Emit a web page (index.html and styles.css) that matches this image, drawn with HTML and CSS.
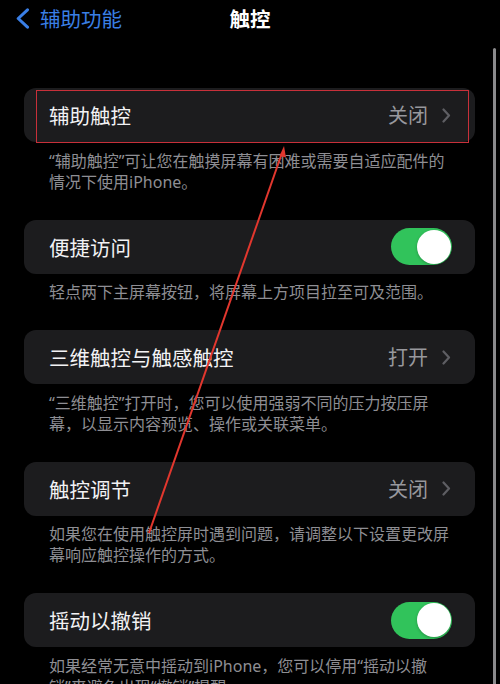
FILE: index.html
```html
<!DOCTYPE html>
<html lang="zh-CN">
<head>
<meta charset="utf-8">
<title>触控</title>
<link rel="stylesheet" href="styles.css">
</head>
<body>
<div class="screen">
  <header class="navbar">
    <div class="nav-back">
      <svg class="back-icon" width="15" height="21" viewBox="0 0 15 21"><path d="M12.5 1.8 L3.2 10.5 L12.5 19.2" fill="none" stroke="#3a7fe6" stroke-width="3" stroke-linecap="round" stroke-linejoin="round"/></svg>
      <span class="back-label">辅助功能</span>
    </div>
    <div class="nav-title">触控</div>
    <div class="nav-spacer"></div>
  </header>

  <main class="list">
    <section class="group">
      <div class="cell cell-marked">
        <span class="cell-title">辅助触控</span>
        <span class="cell-value">关闭</span>
        <svg class="chevron" width="9" height="15" viewBox="0 0 9 15"><path d="M1.5 1.5 L7 7.5 L1.5 13.5" fill="none" stroke="#5e5e63" stroke-width="2.2" stroke-linecap="round" stroke-linejoin="round"/></svg>
        <div class="highlight-box"></div>
      </div>
      <p class="footer">“辅助触控”可让您在触摸屏幕有困难或需要自适应配件的<br>情况下使用iPhone。</p>
    </section>

    <section class="group">
      <div class="cell">
        <span class="cell-title">便捷访问</span>
        <span class="switch"><span class="knob"></span></span>
      </div>
      <p class="footer">轻点两下主屏幕按钮，将屏幕上方项目拉至可及范围。</p>
    </section>

    <section class="group">
      <div class="cell">
        <span class="cell-title">三维触控与触感触控</span>
        <span class="cell-value">打开</span>
        <svg class="chevron" width="9" height="15" viewBox="0 0 9 15"><path d="M1.5 1.5 L7 7.5 L1.5 13.5" fill="none" stroke="#5e5e63" stroke-width="2.2" stroke-linecap="round" stroke-linejoin="round"/></svg>
      </div>
      <p class="footer">“三维触控”打开时，您可以使用强弱不同的压力按压屏<br>幕，以显示内容预览、操作或关联菜单。</p>
    </section>

    <section class="group">
      <div class="cell">
        <span class="cell-title">触控调节</span>
        <span class="cell-value">关闭</span>
        <svg class="chevron" width="9" height="15" viewBox="0 0 9 15"><path d="M1.5 1.5 L7 7.5 L1.5 13.5" fill="none" stroke="#5e5e63" stroke-width="2.2" stroke-linecap="round" stroke-linejoin="round"/></svg>
      </div>
      <p class="footer">如果您在使用触控屏时遇到问题，请调整以下设置更改屏<br>幕响应触控操作的方式。</p>
    </section>

    <section class="group">
      <div class="cell">
        <span class="cell-title">摇动以撤销</span>
        <span class="switch"><span class="knob"></span></span>
      </div>
      <p class="footer">如果经常无意中摇动到iPhone，您可以停用“摇动以撤<br>销”来避免出现“撤销”提醒。</p>
    </section>
  </main>

  <div class="scrollbar"></div>

  <svg class="annotation" width="500" height="684" viewBox="0 0 500 684">
    <line x1="149" y1="533" x2="282" y2="153" stroke="#e2372e" stroke-width="2"/>
    <path d="M284 146 L279.5 156 L286 157.5 Z" fill="#e2372e"/>
  </svg>
</div>
</body>
</html>
```

FILE: styles.css
```css
* {
  box-sizing: border-box;
}

html, body {
  margin: 0;
  padding: 0;
  background: #000;
}

body {
  font-family: "Noto Sans CJK SC", "Noto Sans", "Liberation Sans", sans-serif;
  color: #f2f2f4;
}

.screen {
  position: relative;
  width: 500px;
  height: 684px;
  overflow: hidden;
  background: #000;
}

.navbar {
  display: grid;
  grid-template-columns: 1fr auto 1fr;
  align-items: center;
  height: 36px;
}

.nav-back {
  display: flex;
  align-items: center;
  padding-left: 15px;
  gap: 10px;
}

.back-icon {
  display: block;
}

.back-label {
  font-size: 20.5px;
  line-height: 36px;
  color: #3a7fe6;
}

.nav-title {
  font-size: 20.5px;
  font-weight: 700;
  line-height: 36px;
  color: #fff;
}

.list {
  display: flex;
  flex-direction: column;
  gap: 27px;
  padding: 52px 25px 0 24px;
}

.group {
  display: flex;
  flex-direction: column;
}

.cell {
  position: relative;
  display: flex;
  align-items: center;
  height: 54px;
  padding: 0 24px 0 25px;
  background: #1c1c1e;
  border-radius: 12px;
}

.cell-title {
  flex: 1;
  font-size: 20.5px;
  line-height: 26px;
  color: #f2f2f4;
}

.cell-value {
  font-size: 20px;
  line-height: 26px;
  color: #98989d;
  margin-right: 14px;
}

.chevron {
  display: block;
}

.highlight-box {
  position: absolute;
  left: 12px;
  top: 2px;
  width: 433px;
  height: 53px;
  border: 1.5px solid #c7303a;
}

.switch {
  position: relative;
  display: block;
  width: 61px;
  height: 37px;
  border-radius: 19px;
  background: #31c35b;
  margin-right: -1px;
}

.knob {
  position: absolute;
  right: 1.5px;
  top: 1.5px;
  width: 34px;
  height: 34px;
  border-radius: 50%;
  background: #fff;
  box-shadow: 0 1px 3px rgba(0, 0, 0, 0.25);
}

.footer {
  margin: 0;
  padding: 8.5px 0 0 25px;
  font-family: "Noto Sans", "Noto Sans CJK SC", sans-serif;
  font-size: 16px;
  line-height: 21px;
  color: #8e8e93;
  white-space: nowrap;
}

.scrollbar {
  position: absolute;
  left: 493px;
  top: 48px;
  width: 3px;
  height: 640px;
  border-radius: 2px;
  background: #8a8a8c;
}

.annotation {
  position: absolute;
  left: 0;
  top: 0;
  pointer-events: none;
}
```
